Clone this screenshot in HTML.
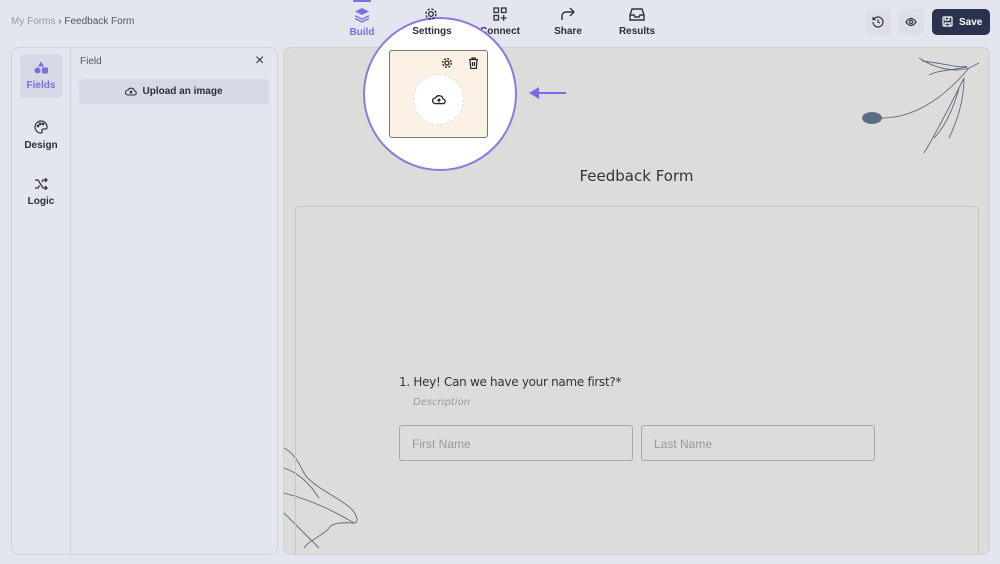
<!DOCTYPE html>
<html><head><meta charset="utf-8"><style>
*{box-sizing:border-box;margin:0;padding:0}
body{width:1000px;height:564px;background:#e3e6ef;font-family:"Liberation Sans",sans-serif;position:relative;overflow:hidden;color:#2b2d3a}
.abs{position:absolute}
.crumb{left:11px;top:16px;font-size:10px;color:#555}
.crumb span{color:#999}
.nav{top:0;text-align:center;font-size:10px;font-weight:bold;width:60px}
.nav svg{display:block;margin:7px auto 4px}
.panel{left:11px;top:47px;width:267px;height:508px;border:1px solid #cfd3e0;border-radius:8px;background:#e3e6ef}
.side{left:0;top:0;width:59px;height:100%;border-right:1px solid #cfd3e0}
.sb{position:absolute;left:8px;width:42px;height:44px;text-align:center;font-size:10px;font-weight:bold;line-height:14px}
.canvas{left:283px;top:47px;width:707px;height:508px;background:#dedcda;border-radius:8px;border:1px solid #d0d0d0;overflow:hidden}
.form{position:absolute;left:11px;top:158px;width:684px;height:360px;border:1px solid #c9c7c5;border-radius:4px}
.inp{position:absolute;top:219px;width:234px;height:36px;border:1px solid #a9a9ad;border-radius:3px;font-size:12px;color:#999;padding:11px 0 0 12px}
</style></head><body>
<div class="abs crumb"><span>My Forms</span> › Feedback Form</div>
<div class="abs" style="left:353px;top:0;width:18px;height:2px;background:#7b6ee0;border-radius:1px"></div>
<div class="abs nav" style="left:332px;color:#7b6ee0"><svg width="16" height="16" viewBox="0 0 16 16" fill="#7b6ee0"><path d="M8 1l7 3.5-7 3.5-7-3.5z"/><path d="M1 8l7 3.5 7-3.5v1.5l-7 3.5-7-3.5z"/><path d="M1 11.5l7 3.5 7-3.5" fill="none" stroke="#7b6ee0" stroke-width="1.4"/></svg>Build</div>
<div class="abs nav" style="left:470px"><svg width="14" height="14" viewBox="0 0 14 14" fill="none" stroke="#333" stroke-width="1.3" style="margin-bottom:5px"><rect x="1" y="1" width="4.5" height="4.5"/><rect x="8.5" y="1" width="4.5" height="4.5"/><rect x="1" y="8.5" width="4.5" height="4.5"/><path d="M10.7 8v6M7.7 11h6"/></svg>Connect</div>
<div class="abs nav" style="left:538px"><svg width="16" height="14" viewBox="0 0 16 14" fill="none" stroke="#333" stroke-width="1.4" style="margin-bottom:5px"><path d="M2 13V9a4 4 0 0 1 4-4h8M10 1l4 4-4 4"/></svg>Share</div>
<div class="abs nav" style="left:607px"><svg width="16" height="14" viewBox="0 0 16 14" fill="none" stroke="#333" stroke-width="1.4" style="margin-bottom:5px"><path d="M1 8l2-6h10l2 6v5H1zM1 8h4l1 2h4l1-2h4"/></svg>Results</div>
<div class="abs" style="left:865px;top:9px;width:26px;height:26px;border-radius:5px;background:#dcdfe9"><svg style="margin:7px" width="12" height="12" viewBox="0 0 12 12" fill="none" stroke="#333" stroke-width="1.2"><path d="M2 3a5 5 0 1 1-1 3M1 1v2.5h2.5M6 3.5V6l2 1"/></svg></div>
<div class="abs" style="left:898px;top:9px;width:26px;height:26px;border-radius:5px;background:#dcdfe9"><svg style="margin:8px 7px" width="12" height="10" viewBox="0 0 12 10" fill="none" stroke="#333" stroke-width="1.2"><path d="M1 5q5-7 10 0q-5 7-10 0z"/><circle cx="6" cy="5" r="1.6"/></svg></div>
<div class="abs" style="left:932px;top:9px;width:58px;height:26px;border-radius:5px;background:#2d3150;color:#fff;font-size:10px;font-weight:bold;padding:7px 0 0 10px"><svg style="vertical-align:-2px;margin-right:6px" width="11" height="11" viewBox="0 0 11 11" fill="none" stroke="#fff" stroke-width="1.2"><rect x="1" y="1" width="9" height="9" rx="1"/><path d="M3 1v3h4V1M3 10V7h5v3"/></svg>Save</div>

<div class="abs panel">
 <div class="abs side">
  <div class="sb" style="top:6px;background:#d6d9e6;border-radius:4px;color:#7b6ee0;padding-top:7px"><svg width="14" height="13" viewBox="0 0 14 12" fill="#7b6ee0"><path d="M7 0l3 5H4z"/><circle cx="3.5" cy="9" r="3"/><rect x="8" y="6" width="6" height="6" rx="1"/></svg><br>Fields</div>
  <div class="sb" style="top:72px"><svg width="14" height="14" viewBox="0 0 14 14" fill="none" stroke="#333" stroke-width="1.2"><path d="M7 1a6 6 0 1 0 0 12c1 0 1.5-1 1-2s0-2 1.5-2H12a1.5 1.5 0 0 0 1-1.5A6 6 0 0 0 7 1z"/><circle cx="4" cy="6" r=".8"/><circle cx="6" cy="3.8" r=".8"/><circle cx="9" cy="4" r=".8"/></svg><br>Design</div>
  <div class="sb" style="top:130px"><svg width="14" height="12" viewBox="0 0 14 12" fill="none" stroke="#333" stroke-width="1.3"><path d="M1 2h3l5 8h4M1 10h3l1.5-2.5M8 4l1-2h4M11 0l2 2-2 2M11 8l2 2-2 2"/></svg><br>Logic</div>
 </div>
 <div class="abs" style="left:68px;top:8px;font-size:10px;color:#555">Field</div>
 <div class="abs" style="left:243px;top:4px;font-size:16px;color:#333">×</div>
 <div class="abs" style="left:67px;top:31px;width:190px;height:25px;background:#d6d9e6;border-radius:4px;font-size:10px;font-weight:bold;text-align:center;padding-top:7px"><svg style="vertical-align:-2px;margin-right:5px" width="12" height="10" viewBox="0 0 12 10" fill="none" stroke="#333" stroke-width="1.1"><path d="M3 9a2.5 2.5 0 0 1 0-5 3.5 3.5 0 0 1 6.5 1A2 2 0 0 1 9 9zM6 8V5M4.7 6.3L6 5l1.3 1.3"/></svg>Upload an image</div>
</div>

<div class="abs canvas">
 <svg class="abs" style="left:570px;top:5px" width="130" height="110" viewBox="0 0 130 110" fill="none" stroke="#5a6a80" stroke-width=".9"><ellipse cx="18" cy="65" rx="10" ry="6" fill="#5a6e85" stroke="none"/><path d="M28 65C60 65 90 45 115 15M65 5c15 10 35 15 50 10M68 8c20 2 40 8 45 5M75 22c10-5 25-5 38-8M115 15l10-5M110 25c-10 20-25 50-40 75M110 25c0 25-8 45-15 60M105 35c-5 20-15 40-25 50"/></svg>
 <svg class="abs" style="left:0;top:395px" width="80" height="115" viewBox="0 0 80 115" fill="none" stroke="#5a6a80" stroke-width=".9"><path d="M0 5c10 5 15 15 20 25s25 20 40 30 15 20 10 20-20-2-25 5-20 12-25 20M0 25c15 5 25 15 35 30M0 50c20 5 45 15 70 30M0 70c10 10 25 25 35 35"/></svg>
 <div class="abs" style="left:0;top:119px;width:705px;text-align:center;font-size:15px;font-family:'DejaVu Sans',sans-serif;color:#333">Feedback Form</div>
 <div class="form">
  <div class="abs" style="left:103px;top:168px;font-size:12px;font-family:'DejaVu Sans',sans-serif;color:#333;letter-spacing:-.3px">1. Hey! Can we have your name first?*</div>
  <div class="abs" style="left:117px;top:190px;font-size:10px;font-style:italic;color:#999;font-family:'DejaVu Sans',sans-serif">Description</div>
  <div class="inp" style="left:103px;top:218px">First Name</div>
  <div class="inp" style="left:345px;top:218px">Last Name</div>
 </div>
</div>

<div class="abs" style="left:363px;top:17px;width:154px;height:154px;border-radius:50%;background:#fff;border:2px solid #8c7ae0;overflow:hidden">
 <div class="abs" style="left:37px;top:7px;width:60px;text-align:center;font-size:10px;font-weight:bold">Settings</div>
 <div class="abs" style="left:24px;top:31px;width:99px;height:88px;background:#fbf1e5;border:1px solid #777;border-radius:3px">
  <svg class="abs" style="left:51px;top:6px" width="12" height="12" viewBox="0 0 12 12" fill="none" stroke="#222" stroke-width="1.3"><circle cx="6" cy="6" r="2"/><circle cx="6" cy="6" r="4.3" stroke-dasharray="2 1.4"/></svg>
  <svg class="abs" style="left:78px;top:6px" width="11" height="12" viewBox="0 0 11 12" fill="none" stroke="#222" stroke-width="1.2"><path d="M1 2.5h9M4 2.5V1h3v1.5M2 2.5l.7 9h5.6l.7-9M4.5 5v4M6.5 5v4"/></svg>
  <div class="abs" style="left:23px;top:23px;width:51px;height:51px;border-radius:50%;background:#fff;border:1px dashed #ddd"><svg style="margin:18px 0 0 18px" width="14" height="12" viewBox="0 0 12 10" fill="none" stroke="#222" stroke-width="1.1"><path d="M3 9a2.5 2.5 0 0 1 0-5 3.5 3.5 0 0 1 6.5 1A2 2 0 0 1 9 9zM6 8V5M4.7 6.3L6 5l1.3 1.3"/></svg></div>
 </div>
</div>
<svg class="abs" style="left:424px;top:7px" width="14" height="14" viewBox="0 0 12 12" fill="none" stroke="#222" stroke-width="1.1"><circle cx="6" cy="6" r="2"/><circle cx="6" cy="6" r="4.3" stroke-dasharray="2 1.4"/></svg>
<svg class="abs" style="left:528px;top:86px" width="40" height="14" viewBox="0 0 40 14"><path d="M38 7H10" stroke="#7b68ee" stroke-width="2"/><path d="M1 7l10-6v12z" fill="#7b68ee"/></svg>
</body></html>
